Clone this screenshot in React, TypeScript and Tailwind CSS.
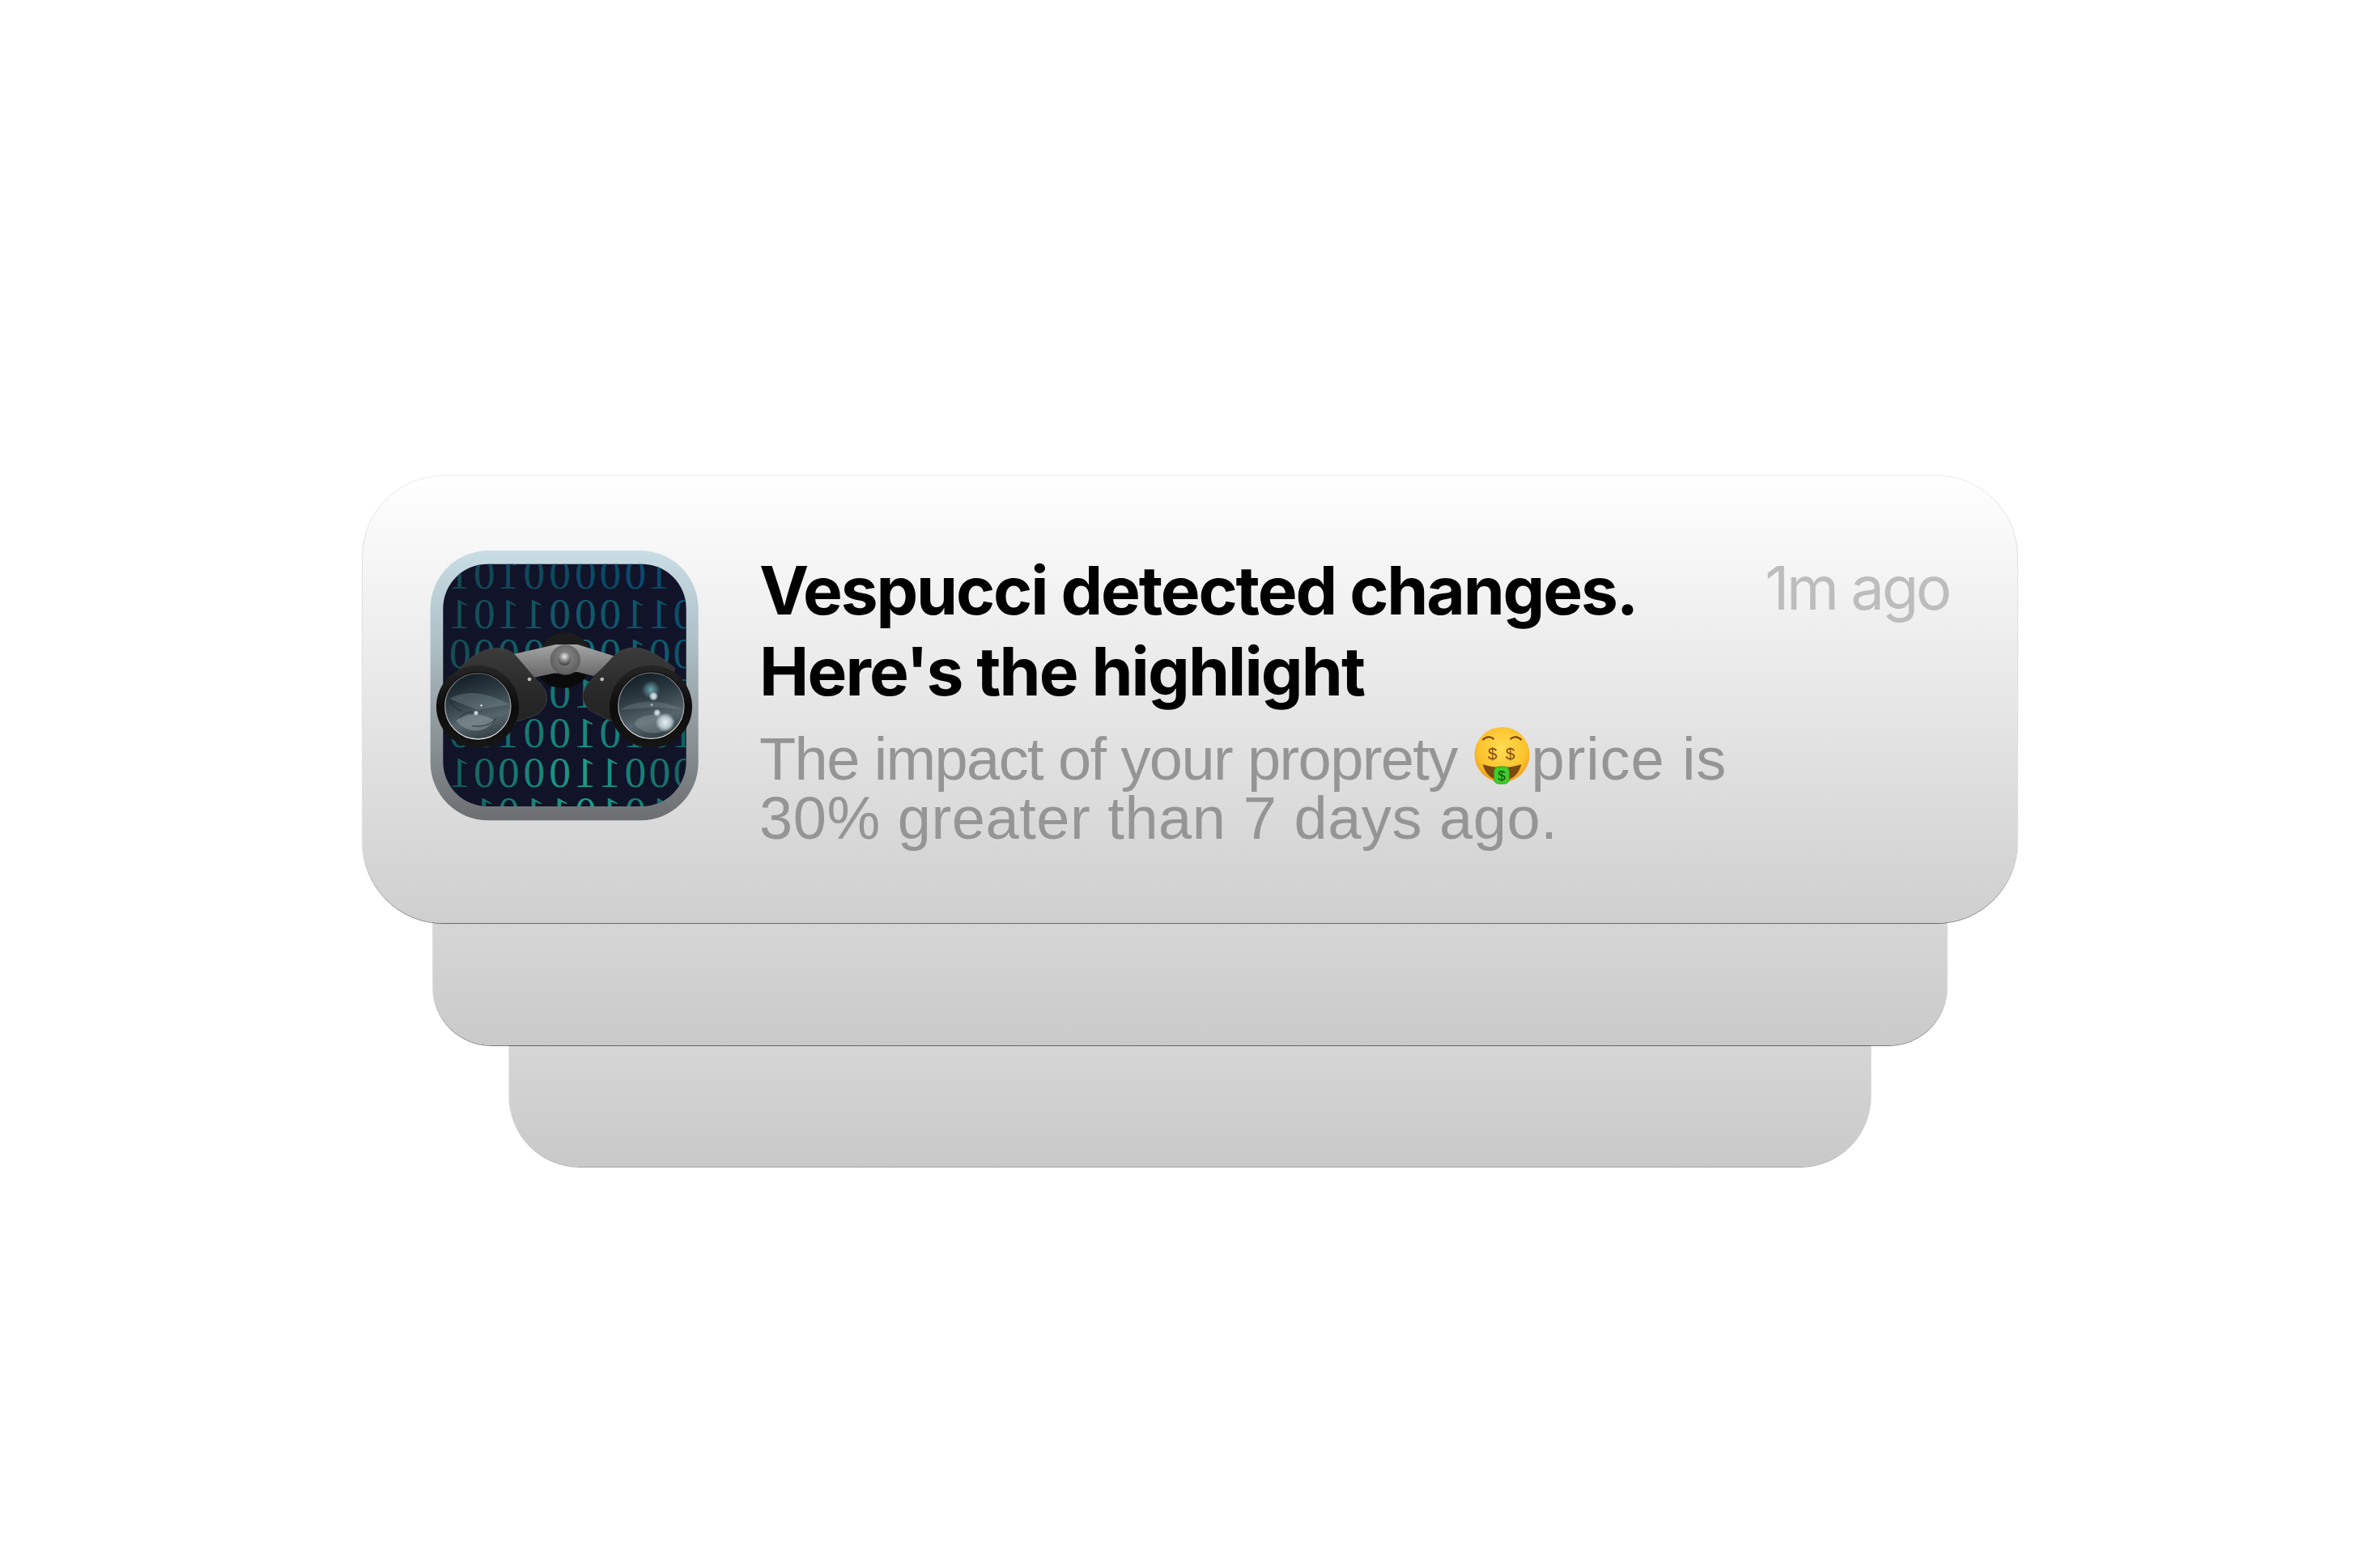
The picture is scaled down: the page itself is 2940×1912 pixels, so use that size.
const ROWS: [number, (string | null)[]][] = [
  [230, [null, "1", "0", "1", "0", "0", "0", "0", "0", "1", null]],
  [378, [null, "1", "0", "1", "1", "0", "0", "0", "1", "1", "0"]],
  [525, [null, "0", "0", "0", "0", "0", "0", "0", "1", "0", "0"]],
  [672, [null, "1", "0", "0", "1", "0", "1", "0", "0", "1", "0"]],
  [820, ["0", "0", "0", "1", "0", "0", "1", "0", "1", "0", "1"]],
  [965, [null, "1", "0", "0", "0", "0", "1", "1", "0", "0", "0"]],
  [1113, [null, null, "1", "0", "1", "1", "0", "1", "0", "1", null]],
];
const XS = [105, 205, 295, 385, 480, 575, 670, 762, 855, 945, 1035];

function mix(a: number[], b: number[], t: number) {
  const k = Math.max(0, Math.min(1, t));
  return a.map((v, i) => Math.round(v + (b[i] - v) * k));
}

function digitColor(x: number, y: number) {
  const v = (y - 230) / 735;
  const top = mix([20, 72, 82], [6, 74, 112], (x - 200) / 800);
  const bottom = mix([20, 92, 92], [28, 158, 140], 1 - Math.abs(x - 650) / 450);
  const c = mix(top, bottom, v);
  return `rgb(${c[0]},${c[1]},${c[2]})`;
}

function AppIcon() {
  return (
    <svg viewBox="0 0 1200 1200" className="w-[400px] h-[400px] shrink-0">
      <defs>
        <linearGradient id="frame" x1="0" y1="0" x2="0" y2="1">
          <stop offset="0" stopColor="#c9dde5" />
          <stop offset="0.35" stopColor="#aebfc6" />
          <stop offset="0.7" stopColor="#8a9396" />
          <stop offset="1" stopColor="#6c6e70" />
        </linearGradient>
        <clipPath id="screen">
          <rect x="142" y="140" width="901" height="898" rx="165" />
        </clipPath>
        <clipPath id="lensL">
          <circle cx="271" cy="667" r="120" />
        </clipPath>
        <clipPath id="lensR">
          <circle cx="913" cy="665" r="120" />
        </clipPath>
        <linearGradient id="body" x1="0" y1="0" x2="0" y2="1">
          <stop offset="0" stopColor="#3c3c3c" />
          <stop offset="0.5" stopColor="#2b2b2b" />
          <stop offset="1" stopColor="#222222" />
        </linearGradient>
        <linearGradient id="arm" x1="0" y1="0" x2="0" y2="1">
          <stop offset="0" stopColor="#a6a6a6" />
          <stop offset="1" stopColor="#666666" />
        </linearGradient>
        <radialGradient id="ball" cx="0.5" cy="0.3" r="0.7">
          <stop offset="0" stopColor="#e8e8e8" />
          <stop offset="0.5" stopColor="#8a8a8a" />
          <stop offset="1" stopColor="#3c3c3c" />
        </radialGradient>
        <radialGradient id="hub" cx="0.5" cy="0.4" r="0.6">
          <stop offset="0" stopColor="#8c8c8c" />
          <stop offset="1" stopColor="#5a5a5a" />
        </radialGradient>
        <linearGradient id="ring" x1="0" y1="0" x2="0" y2="1">
          <stop offset="0" stopColor="#262626" />
          <stop offset="0.5" stopColor="#0c0c0c" />
          <stop offset="1" stopColor="#161616" />
        </linearGradient>
        <linearGradient id="lens" x1="0.3" y1="0" x2="0.6" y2="1">
          <stop offset="0" stopColor="#121d26" />
          <stop offset="0.35" stopColor="#2c3a42" />
          <stop offset="0.72" stopColor="#56666c" />
          <stop offset="1" stopColor="#323e44" />
        </linearGradient>
        <linearGradient id="rim" x1="0" y1="0" x2="0" y2="1">
          <stop offset="0" stopColor="#5a5a5a" />
          <stop offset="1" stopColor="#d6d6d6" />
        </linearGradient>
        <radialGradient id="glow" cx="0.5" cy="0.5" r="0.5">
          <stop offset="0" stopColor="#e8f1f3" />
          <stop offset="0.6" stopColor="#c8d8dc" stopOpacity="0.8" />
          <stop offset="1" stopColor="#c8d8dc" stopOpacity="0" />
        </radialGradient>
        <radialGradient id="teal" cx="0.5" cy="0.5" r="0.5">
          <stop offset="0" stopColor="#6aa6b2" />
          <stop offset="1" stopColor="#6aa6b2" stopOpacity="0" />
        </radialGradient>
      </defs>
      <rect x="95" y="90" width="993" height="1000" rx="215" fill="url(#frame)" />
      <rect x="142" y="140" width="901" height="898" rx="165" fill="#111328" />
      <g clipPath="url(#screen)" fontFamily="'Liberation Serif', serif" fontSize="160" textAnchor="middle">
        {ROWS.map(([y, digits]) =>
          digits.map((d, i) =>
            d ? (
              <text key={`${y}-${i}`} transform={`translate(${XS[i]},${y}) scale(-1,1)`} fill={digitColor(XS[i], y)}>
                {d}
              </text>
            ) : null,
          ),
        )}
      </g>
      <circle cx="595" cy="490" r="97" fill="#1c1c1c" />
      <ellipse cx="585" cy="532" rx="92" ry="68" fill="#0a0a0a" />
      <path d="M400 475 L560 438 L640 438 L780 482 L700 555 L640 540 L550 545 L480 560 Z" fill="url(#arm)" />
      <circle cx="595" cy="495" r="56" fill="url(#hub)" />
      <circle cx="592" cy="492" r="24" fill="url(#ball)" />
      <path d="M200 530 C240 485 290 450 345 452 C375 454 395 462 410 478 L515 600 C535 630 530 670 490 698 L420 722 L220 700 Z" fill="url(#body)" stroke="#4a4a4a" strokeWidth="2" />
      <path d="M1000 525 C950 485 900 450 850 450 C815 452 795 462 775 480 L680 582 C650 615 655 660 690 685 L765 722 L980 700 Z" fill="url(#body)" stroke="#4a4a4a" strokeWidth="2" />
      <circle cx="462" cy="567" r="7" fill="#bdbdbd" />
      <circle cx="731" cy="567" r="7" fill="#bdbdbd" />

      <circle cx="270" cy="668" r="153" fill="url(#ring)" />
      <circle cx="271" cy="667" r="127" fill="#060606" />
      <circle cx="271" cy="667" r="122" fill="url(#lens)" stroke="url(#rim)" strokeWidth="4" />
      <g clipPath="url(#lensL)">
        <path d="M165 640 C230 600 320 620 385 660 L270 680 Z" fill="#93a3a8" fillOpacity="0.3" />
        <path d="M190 720 C230 690 290 690 330 720 C300 770 230 770 190 720 Z" fill="#a4b2b6" fillOpacity="0.4" />
        <path d="M170 640 C175 665 190 680 215 685 M205 710 C220 690 240 685 255 690 M250 740 C290 745 320 735 340 710" fill="none" stroke="#1e2428" strokeWidth="2.5" />
      </g>
      <circle cx="264" cy="692" r="10" fill="url(#glow)" />
      <circle cx="284" cy="664" r="4" fill="#c8d0d2" />

      <circle cx="912" cy="668" r="153" fill="url(#ring)" />
      <circle cx="913" cy="665" r="127" fill="#060606" />
      <circle cx="913" cy="665" r="122" fill="url(#lens)" stroke="url(#rim)" strokeWidth="4" />
      <g clipPath="url(#lensR)">
        <path d="M800 680 C850 640 960 640 1030 680 L930 670 Z" fill="#93a3a8" fillOpacity="0.25" />
        <path d="M850 730 C880 690 950 690 1000 720 C970 780 880 780 850 730 Z" fill="#9fb0b4" fillOpacity="0.3" />
      </g>
      <circle cx="912" cy="605" r="34" fill="url(#teal)" />
      <circle cx="922" cy="630" r="17" fill="url(#glow)" />
      <circle cx="935" cy="691" r="14" fill="url(#glow)" />
      <circle cx="965" cy="727" r="36" fill="url(#glow)" />
      <circle cx="915" cy="662" r="4" fill="#b8c8cc" />
    </svg>
  );
}

function MoneyFace() {
  return (
    <svg viewBox="0 0 72 71" className="inline-block w-[73px] h-[71px] -my-[10px] align-[4px]">
      <defs>
        <radialGradient id="face" cx="0.5" cy="0.4" r="0.62">
          <stop offset="0" stopColor="#ffdc52" />
          <stop offset="0.7" stopColor="#fcc22c" />
          <stop offset="1" stopColor="#ef9a1c" />
        </radialGradient>
      </defs>
      <circle cx="36" cy="34" r="34" fill="url(#face)" />
      <path d="M12 16 Q19 9 26 15" fill="none" stroke="#6b3a0a" strokeWidth="2" />
      <path d="M46 15 Q53 9 60 16" fill="none" stroke="#6b3a0a" strokeWidth="2" />
      <text x="24" y="40" textAnchor="middle" fontSize="21" fontFamily="'Liberation Sans', sans-serif" fill="#8a4f0c">$</text>
      <text x="46" y="40" textAnchor="middle" fontSize="21" fontFamily="'Liberation Sans', sans-serif" fill="#8a4f0c">$</text>
      <path d="M12 46 Q36 54 60 46 Q54 66 36 66 Q18 66 12 46 Z" fill="#7a4a10" />
      <rect x="26" y="49" width="19" height="21" rx="6" fill="#43cc2c" stroke="#2a9a1c" strokeWidth="1" />
      <text x="35.5" y="66" textAnchor="middle" fontSize="17" fontFamily="'Liberation Sans', sans-serif" fill="#14500e">$</text>
    </svg>
  );
}

export default function App() {
  return (
    <div className="min-h-[1912px] bg-white flex flex-col items-center pt-[588px] font-['Liberation_Sans',sans-serif]">
      <div className="relative z-20 w-[2044px] h-[552px] rounded-[100px] bg-gradient-to-b from-white to-[#cfcfcf] shadow-[0_1px_1px_rgba(0,0,0,0.5),0_0_2px_rgba(0,0,0,0.25)] flex items-start pl-[52px] pt-[62px] pr-[84px]">
        <AppIcon />
        <div className="flex-1 ml-[38px] pt-[30px]">
          <div className="flex items-start justify-between">
            <div className="font-['Inter',sans-serif] font-bold text-[82px] leading-[100px] text-black whitespace-nowrap">
              <span className="tracking-[-2.15px]">Vespucci detected changes.</span>
              <br />
              <span className="tracking-[-1.85px]">Here's the highlight</span>
            </div>
            <div className="font-['Inter',sans-serif] font-normal text-[74px] leading-[100px] text-[#bdbdbd] tracking-[-3.2px] -mt-[4px]">1m ago</div>
          </div>
          <div className="text-[74px] leading-[73px] text-[#959595] mt-[21px] whitespace-nowrap">
            <span className="tracking-[-1.6px]">The impact of your proprety </span>
            <MoneyFace />
            <span className="tracking-[0.9px]">price is</span>
            <br />
            <span className="tracking-[0.55px]">30% greater than 7 days ago.</span>
          </div>
        </div>
      </div>
      <div className="relative z-10 w-[1870px] h-[151px] rounded-b-[72px] bg-gradient-to-b from-[#d6d6d6] to-[#cacaca] shadow-[0_1px_1px_rgba(0,0,0,0.5),0_0_2px_rgba(0,0,0,0.25)]" />
      <div className="relative z-0 w-[1682px] h-[150px] rounded-b-[88px] bg-gradient-to-b from-[#d6d6d6] to-[#c9c9c9] shadow-[0_1px_1px_rgba(0,0,0,0.35),0_0_2px_rgba(0,0,0,0.2)]" />
    </div>
  );
}
